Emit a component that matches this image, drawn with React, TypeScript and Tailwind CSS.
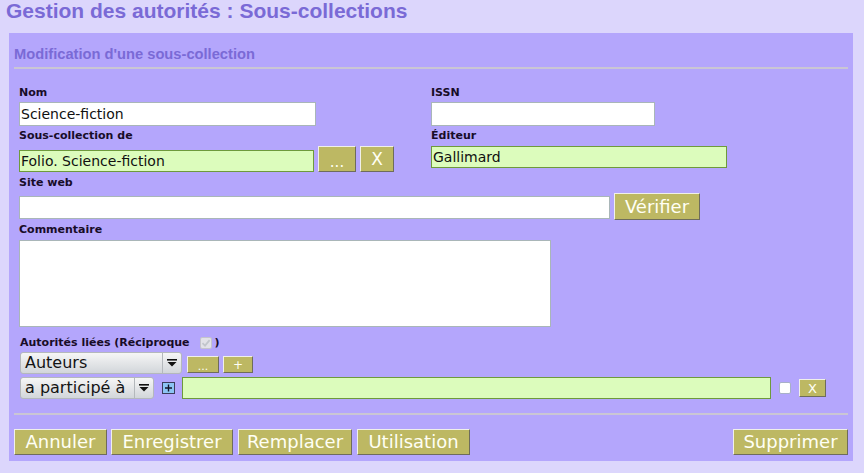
import React from "react";

const lbl =
  "font-['DejaVu_Sans',sans-serif] font-bold text-[11px] leading-[13px] text-[#180c28] h-[13px] whitespace-nowrap";
const btnBase =
  "bg-[#bdb863] text-[#fffff4] font-['DejaVu_Sans',sans-serif] border border-t-[#f0f0ea] border-l-[#f0f0ea] border-b-[#6e6c5c] border-r-[#6e6c5c] flex items-center justify-center leading-none shrink-0";
const whiteInput =
  "bg-white border border-[#a9b6b8] font-['DejaVu_Sans',sans-serif] text-[14px] text-[#101010] px-[1px] outline-none";
const greenInput =
  "bg-[#dcfcbc] border border-[#6e9a3c] font-['DejaVu_Sans',sans-serif] text-[14px] text-[#101010] px-[1px] outline-none";

function Arrow() {
  return (
    <svg width="10" height="8" viewBox="0 0 10 8">
      <rect x="0" y="0" width="10" height="1.6" fill="#111" />
      <path d="M0.5 3 L9.5 3 L5 7.5 Z" fill="#111" />
    </svg>
  );
}

function FakeSelect({ text, className }: { text: string; className: string }) {
  return (
    <div
      className={`flex items-stretch rounded-[3px] border border-[#b4b8bc] bg-gradient-to-b from-[#f6f6f6] to-[#d2d6da] font-['DejaVu_Sans',sans-serif] text-[16px] text-[#141414] ${className}`}
    >
      <div className="flex-1 flex items-center pl-[4px] border-r border-[#b4b8bc] leading-none">
        {text}
      </div>
      <div className="w-[18px] flex items-center justify-center">
        <Arrow />
      </div>
    </div>
  );
}

export default function App() {
  return (
    <div className="w-[864px] h-[473px] bg-[#dcd6fc] overflow-hidden">
      <h1 className="h-[33px] pl-[6px] font-['Liberation_Sans',Arial,sans-serif] font-bold text-[21px] leading-[22px] text-[#7a6ad6]">
        Gestion des autorités : Sous-collections
      </h1>
      <div className="ml-[9px] w-[844px] h-[428px] bg-[#b4a6fc] px-[5px] pt-[13px]">
        <div className="h-[17px] font-['Liberation_Sans',Arial,sans-serif] font-bold text-[14.7px] leading-[17px] text-[#7a6ad6]">
          Modification d'une sous-collection
        </div>
        <div className="mt-[4px] h-[2px] bg-[#cac6d4]" />

        <div className="ml-[5px] mt-[17px] grid grid-cols-[412px_1fr]">
          <div className="flex flex-col">
            <div className={lbl}>Nom</div>
            <input
              readOnly
              defaultValue="Science-fiction"
              className={`${whiteInput} mt-[3px] w-[297px] h-[24px]`}
            />
            <div className={`${lbl} mt-[3px]`}>Sous-collection de</div>
            <div className="mt-[4px] flex items-end h-[26px]">
              <input
                readOnly
                defaultValue="Folio. Science-fiction"
                className={`${greenInput} w-[295px] h-[22px]`}
              />
              <button className={`${btnBase} ml-[4px] w-[38px] h-[26px] text-[15px] pt-[6px]`}>...</button>
              <button className={`${btnBase} ml-[4px] w-[34px] h-[26px] text-[17px]`}>X</button>
            </div>
          </div>
          <div className="flex flex-col">
            <div className={lbl}>ISSN</div>
            <input readOnly defaultValue="" className={`${whiteInput} mt-[3px] w-[224px] h-[24px]`} />
            <div className={`${lbl} mt-[3px]`}>Éditeur</div>
            <input
              readOnly
              defaultValue="Gallimard"
              className={`${greenInput} mt-[4px] w-[296px] h-[22px]`}
            />
          </div>
        </div>

        <div className="ml-[5px] flex flex-col">
          <div className={`${lbl} mt-[4px]`}>Site web</div>
          <div className="mt-[4px] flex items-end h-[27px]">
            <input readOnly defaultValue="" className={`${whiteInput} w-[591px] h-[23px] mb-[1px]`} />
            <button className={`${btnBase} ml-[4px] w-[86px] h-[27px] text-[18px]`}>Vérifier</button>
          </div>
          <div className={`${lbl} mt-[3px]`}>Commentaire</div>
          <textarea
            readOnly
            className="mt-[4px] w-[532px] h-[87px] bg-white border border-[#a9b6b8] resize-none outline-none block"
          />
          <div className={`${lbl} mt-[9px] ml-[1px] flex items-center`}>
            <span>Autorités liées (Réciproque</span>
            <span className="ml-[10px] mr-[3px] inline-flex">
              <svg width="12" height="12" viewBox="0 0 12 12">
                <rect x="0.5" y="0.5" width="11" height="11" rx="1.5" fill="#e2e2e8" stroke="#c4c4cc" />
                <path d="M2.5 6.2 L5 8.6 L9.6 3.2" fill="none" stroke="#c2c6cc" strokeWidth="1.8" />
              </svg>
            </span>
            <span>)</span>
          </div>
          <div className="mt-[3px] ml-[1px] flex items-end h-[22px]">
            <FakeSelect text="Auteurs" className="w-[162px] h-[22px]" />
            <button className={`${btnBase} ml-[5px] w-[32px] h-[17px] text-[11px] mb-[1px] pt-[4px]`}>...</button>
            <button className={`${btnBase} ml-[4px] w-[30px] h-[17px] text-[12px] mb-[1px]`}>+</button>
          </div>
          <div className="mt-[3px] ml-[1px] flex items-center h-[22px]">
            <FakeSelect text="a participé à" className="w-[134px] h-[22px]" />
            <span className="ml-[8px] inline-flex">
              <svg width="13" height="12" viewBox="0 0 13 12">
                <rect x="0.5" y="0.5" width="12" height="11" fill="#8cc4f4" stroke="#3c3c5c" />
                <path d="M6.5 2.5 V9.5 M3 6 H10" stroke="#141428" strokeWidth="1.4" />
              </svg>
            </span>
            <input readOnly defaultValue="" className={`${greenInput} ml-[7px] w-[589px] h-[22px]`} />
            <span className="ml-[8px] w-[12px] h-[12px] bg-white border border-[#a8b0c8] rounded-[2px]" />
            <button className={`${btnBase} ml-[8px] w-[27px] h-[18px] text-[13px]`}>X</button>
          </div>
        </div>

        <div className="mt-[14px] h-[2px] bg-[#cac6d4]" />

        <div className="mt-[14px] flex items-center h-[26px]">
          <button className={`${btnBase} w-[93px] h-[26px] text-[18px]`}>Annuler</button>
          <button className={`${btnBase} ml-[4px] w-[122px] h-[26px] text-[18px]`}>Enregistrer</button>
          <button className={`${btnBase} ml-[5px] w-[114px] h-[26px] text-[18px]`}>Remplacer</button>
          <button className={`${btnBase} ml-[5px] w-[113px] h-[26px] text-[18px]`}>Utilisation</button>
          <div className="flex-1" />
          <button className={`${btnBase} w-[115px] h-[26px] text-[18px]`}>Supprimer</button>
        </div>
      </div>
    </div>
  );
}
